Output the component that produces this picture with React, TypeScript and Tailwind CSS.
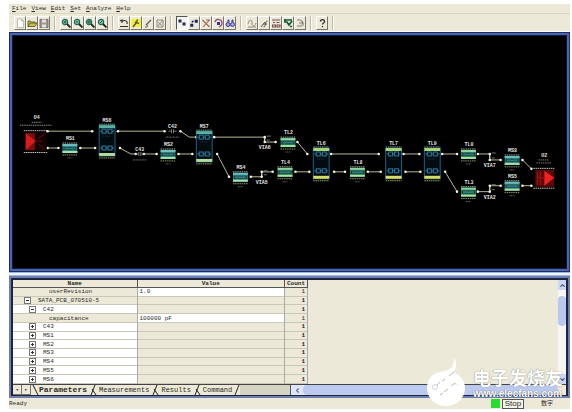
import { Fragment, ReactNode } from 'react';
import { ChevronDown, ChevronLeft, ChevronUp } from 'lucide-react';

const MENUS = ['File', 'View', 'Edit', 'Set', 'Analyze', 'Help'];

interface Tool {
    name: string;
    icon: ReactNode;
    pressed?: boolean;
}

const magnifier = (mark: string) => (
    <>
        <circle cx="4" cy="4" r="2.6" fill="#7fc4a4" stroke="#1e6b55" strokeWidth="1.2" />
        <path d="M6 6l3.5 3.5" stroke="#20252b" strokeWidth="1.8" />
        <path d={mark} stroke="#123d33" strokeWidth="0.8" />
    </>
);

const TOOL_GROUPS: Tool[][] = [
    [
        { name: 'New', icon: <path d="M2.5 1h4l2 2v6.5h-6z M6.5 1v2h2" fill="#fff" stroke="#a8a89c" strokeWidth="0.7" /> },
        { name: 'Open', icon: <path d="M1 8.5V3h2.5l1 1H8v1.5M1 8.5l2-3.5h7L8 8.5z" fill="#c8bf4a" stroke="#55511c" strokeWidth="0.8" /> },
        {
            name: 'Save',
            icon: (
                <>
                    <path d="M1 1.5h8v8H1z" fill="#a09a94" stroke="#6b5d5a" strokeWidth="0.8" />
                    <path d="M3 1.5h4v3H3zM3 6.5h4v3H3z" fill="#e8e2dc" />
                </>
            ),
        },
    ],
    [
        { name: 'Zoom in', icon: magnifier('M2.8 4h2.4M4 2.8v2.4') },
        { name: 'Zoom out', icon: magnifier('M2.8 4h2.4') },
        { name: 'Zoom area', icon: magnifier('M3 3h2v2H3z') },
        { name: 'Zoom fit', icon: magnifier('M3 5l2-2') },
    ],
    [
        { name: 'Undo', icon: <path d="M1 3l2-1v3M3 3.5c3-2 6-.5 5 2.5M1 8.5h8" stroke="#33332f" strokeWidth="1.1" /> },
        {
            name: 'Highlight',
            icon: (
                <>
                    <path d="M0 1h10v8H0z" fill="#f4f03a" />
                    <path d="M6.5 1.5L5 5 2 9M4 4l4 1.5" stroke="#62611f" strokeWidth="1.6" />
                </>
            ),
        },
        { name: 'Pencil', icon: <path d="M8 2L3.5 6.5M3 6l2 2.5M2 9h2" stroke="#55554e" strokeWidth="1.1" /> },
        { name: 'Cut', icon: <path d="M2 2h6v7H2zM8 2L3 8M3 4l4 4" stroke="#85827a" strokeWidth="0.9" /> },
    ],
    [
        { name: 'Place', pressed: true, icon: <path d="M1.5 1.5h3v3h-3zM5.5 4.5h3v3h-3z" fill="#28285e" /> },
        { name: 'Connect', icon: <path d="M1.5 6h2.5v2.5H1.5zM6 2h2.5v2.5H6zM3 5V3h2" fill="#20206c" stroke="#20206c" strokeWidth="0.5" /> },
        { name: 'Delete', icon: <path d="M1.5 2l7 7M8.5 2L2 9M5 2h4" stroke="#a0655c" strokeWidth="1.1" /> },
        {
            name: 'Rotate',
            icon: (
                <>
                    <path d="M2 4c1-4 7-3 7 1 0 2-1.5 3.5-3 4" stroke="#93456b" strokeWidth="1.2" />
                    <path d="M4 4h3v3H4z" fill="#34348c" />
                </>
            ),
        },
        {
            name: 'Find',
            icon: (
                <>
                    <path d="M3 4V2h1v2M7 4V2h1v2" stroke="#33339c" />
                    <circle cx="3" cy="6.5" r="2" fill="#a9acd9" stroke="#33339c" />
                    <circle cx="7.5" cy="6.5" r="2" fill="#a9acd9" stroke="#33339c" />
                </>
            ),
        },
    ],
    [
        { name: 'Simulate', icon: <path d="M1 6c1-5 4-5 4-1s3 4 4 0M1 9h8" stroke="#8b8b80" /> },
        { name: 'Sweep', icon: <path d="M2 9l4-5M4.5 9c3 0 1-6 4-6M4 6h4" stroke="#55554c" /> },
        { name: 'Report', icon: <path d="M1 2h8M2 4.5h2M5.5 4.5h3M1.5 7h3v2h-3zM6 7h3v2H6z" stroke="#7b4d55" strokeWidth="1.1" /> },
        { name: 'Waveform', icon: <path d="M1 2h8M1 4h3l2 3 3-4M7 8.5h2M2 1v3" stroke="#175b3a" strokeWidth="1.7" /> },
        { name: 'Export', icon: <path d="M2 2h4l2 2v4M2 8h5M4 5h4L6.5 3.5M8 5L6.5 6.5" stroke="#77746c" strokeWidth="0.9" /> },
    ],
    [
        { name: 'Help', icon: <path d="M3.5 3.5c0-2.500 4-2.500 4 0 0 1.500-2 1.500-2 3M5.5 8v1.3" stroke="#2c2c28" strokeWidth="1.3" /> },
    ],
];

// Canvas coordinates: single blocks are 15 wide, coupled pairs span both nets
const SINGLES = [
    { x: 61, y: 143, label: 'MS1', tone: 'ms' },
    { x: 160, y: 149, label: 'MS2', tone: 'ms' },
    { x: 233, y: 172, label: 'MS4', tone: 'ms' },
    { x: 281, y: 137, label: 'TL2', tone: 'tl' },
    { x: 278, y: 167, label: 'TL4', tone: 'tl' },
    { x: 351, y: 167, label: 'TL8', tone: 'tl' },
    { x: 463, y: 149, label: 'TL0', tone: 'tl' },
    { x: 463, y: 187, label: 'TL3', tone: 'tl' },
    { x: 507, y: 155, label: 'MS8', tone: 'ms' },
    { x: 507, y: 181, label: 'MS5', tone: 'ms' },
];

const PAIRS = [
    { x: 98, y: 125, label: 'MS6', tone: 'ms' },
    { x: 196, y: 131, label: 'MS7', tone: 'ms' },
    { x: 314, y: 148, label: 'TL6', tone: 'tl' },
    { x: 387, y: 148, label: 'TL7', tone: 'tl' },
    { x: 426, y: 148, label: 'TL9', tone: 'tl' },
];

const CAPS = [
    { x: 172, y: 132, label: 'C42' },
    { x: 139, y: 155, label: 'C43' },
];

const VIAS = [
    { x: 265, y: 138, end: 143, label: 'VIA6' },
    { x: 262, y: 178, end: 173, label: 'VIA5' },
    { x: 492, y: 155, end: 161, label: 'VIA7' },
    { x: 492, y: 193, end: 187, label: 'VIA2' },
];

const WIRES = [
    '46,132 91,132', '117,132 164,132', '180,132 189,138 196,138', '214,138 265,138',
    '46,149 57,149', '79,149 94,149', '119,149 130,155 135,155', '143,155 156,155', '178,155 192,155',
    '217,155 229,178', '251,178 262,178', '265,143 276,143', '298,143 308,155', '332,155 380,155',
    '262,173 273,173', '296,173 310,173', '335,173 346,173', '369,173 382,173', '405,155 421,155',
    '407,173 422,173', '444,155 459,155', '447,173 459,193', '480,155 492,155', '480,193 492,193',
    '492,161 503,161', '492,187 503,187', '525,161 534,170', '525,187 534,187',
];

function Coil({ x, y }: { x: number; y: number }) {
    return (
        <g fill="none" stroke="#2d7fa3" strokeWidth="1">
            <rect x={x} y={y - 2} width="4" height="4" />
            <rect x={x + 6} y={y - 2} width="4" height="4" />
            <path d={`M${x - 2} ${y}h2M${x + 4} ${y}h2M${x + 10} ${y}h2`} />
        </g>
    );
}

function Label({ x, y, children }: { x: number; y: number; children: string }) {
    return (
        <text x={x} y={y} textAnchor="middle" fontSize="5" fontWeight="bold" fill="#e4e4e4">{children}</text>
    );
}

function Schematic() {
    return (
        <svg
            viewBox="12 36 556 234"
            className="block h-full w-full font-['Liberation_Mono',monospace]"
            role="img"
            aria-label="Topology"
        >
            <g fill="none" stroke="#b9b99a" strokeWidth="1">
                {WIRES.map(points => <polyline key={points} points={points} />)}
            </g>
            <g fill="#f4f4dc">
                {WIRES.map(points => {
                    const ends = points.split(' ').map(p => p.split(','));
                    return [ends[0], ends[ends.length - 1]].map(([x, y], i) => (
                        <circle key={`${points}-${i}`} cx={x} cy={y} r="1.3" />
                    ));
                })}
            </g>

            {SINGLES.map(({ x, y, label, tone }) => (
                <g key={label}>
                    <Label x={x + 8} y={y - 2}>{label}</Label>
                    <path d={`M${x} ${y + 1}h15`} stroke="#9fb8a4" strokeDasharray="1.5 0.7" />
                    <rect x={x} y={y + 2} width="15" height="9" fill={tone === 'ms' ? '#2d8088' : '#2f7a55'} />
                    <path d={`M${x} ${y + 3}h15`} stroke={tone === 'ms' ? '#6fc0bb' : '#8ad5a0'} strokeWidth="2" />
                    <path d={`M${x} ${y + 10}h15`} stroke="#a5e3a2" strokeWidth="2" />
                    <rect x={x + 1} y={y + 5} width="13" height="3" fill="#10393b" />
                    <path d={`M${x + 2} ${y + 6}h4l3 1h4M${x + 2} ${y + 7}h4l3-1h4`} stroke="#48a09b" strokeWidth="0.7" fill="none" />
                    <path d={`M${x} ${y + 13}h15`} stroke="#8c9c6c" strokeDasharray="1.5 0.7" />
                    <path d={`M${x + 5} ${y + 16}h5`} stroke="#666" strokeDasharray="1 0.5" />
                </g>
            ))}

            {PAIRS.map(({ x, y, label, tone }) => (
                <g key={label}>
                    <Label x={x + 8} y={y - 2}>{label}</Label>
                    <path d={`M${x} ${y}h16`} stroke="#9aac98" strokeDasharray="1.5 0.7" />
                    <rect x={x} y={y + 1} width="16" height="31" fill="#020c10" stroke="#255f83" />
                    <rect x={x} y={y + 1} width="16" height="3" fill={tone === 'ms' ? '#59b39c' : '#a9d473'} />
                    <Coil x={x + 3} y={y + 7} />
                    <Coil x={x + 3} y={y + 24} />
                    <path d={`M${x + 4} ${y + 12}h8`} stroke="#23404d" strokeDasharray="1 1" />
                    <rect x={x} y={y + 29} width="16" height="3" fill={tone === 'ms' ? '#b2dda0' : '#d6dd60'} />
                    <path d={`M${x} ${y + 34}h16`} stroke="#a3a35b" strokeDasharray="1.5 0.7" />
                </g>
            ))}

            {CAPS.map(({ x, y, label }) => (
                <g key={label}>
                    <Label x={x} y={y - 3}>{label}</Label>
                    <path d={`M${x - 4} ${y}h3M${x + 1} ${y}h3M${x - 1} ${y - 2}v4M${x + 1} ${y - 2}v4`} stroke="#8f9a8c" strokeWidth="0.8" />
                    <path d={`M${x - 7} ${y + 6}h14`} stroke="#777" strokeDasharray="1 0.5" />
                </g>
            ))}

            {VIAS.map(({ x, y, end, label }) => (
                <g key={label}>
                    <path d={`M${x} ${y}V${end}`} stroke="#e8e8d8" strokeWidth="1.2" />
                    <path d={`M${x + 2} ${Math.min(y, end) - 1}h4M${x + 2} ${Math.max(y, end) - 2}h3`} stroke="#777" />
                    <Label x={x} y={Math.max(y, end) + 7}>{label}</Label>
                </g>
            ))}

            {/* driver */}
            <Label x={35} y={120}>U4</Label>
            <path d="M30 123h10M18 126h32" stroke="#8b8b8b" strokeDasharray="1.5 0.7" />
            <rect x="23" y="133" width="22" height="19" fill="#150303" />
            <path d="M24 134h9v17h-9z" fill="#7c0d0d" />
            <path d="M24 134l10 8-10 9z" fill="#d81c1c" />
            <path d="M34 142h7M37 139l6-4M37 145l6 5" stroke="#5d1212" />
            <path d="M22 131.5h24M22 153.5h24" stroke="#c9c9c9" strokeDasharray="1.5 0.7" />

            {/* receiver */}
            <Label x={547} y={158}>U2</Label>
            <path d="M541 161h11M539 164h15" stroke="#777" strokeDasharray="1.5 0.7" />
            <rect x="538" y="171" width="19" height="17" fill="#5d0808" />
            <path d="M547 172l10 7-10 8z" fill="#f02020" />
            <path d="M540 173v13M543 173v13M540 179h8" stroke="#a01818" />
            <path d="M536 169.5h21M536 189.5h21" stroke="#c9c9c9" strokeDasharray="1.5 0.7" />
        </svg>
    );
}

interface Row {
    name: string;
    level: 0 | 1 | 2;
    open?: boolean;
    value?: string;
}

const ROWS: Row[] = [
    { name: 'userRevision', level: 2, value: '1.0' },
    { name: 'SATA_PCB_070510-5', level: 0, open: true },
    { name: 'C42', level: 1, open: true },
    { name: 'capacitance', level: 2, value: '100000 pF' },
    { name: 'C43', level: 1 },
    { name: 'MS1', level: 1 },
    { name: 'MS2', level: 1 },
    { name: 'MS3', level: 1 },
    { name: 'MS4', level: 1 },
    { name: 'MS5', level: 1 },
    { name: 'MS6', level: 1 },
];

const INDENT = { 0: 'pl-[11px]', 1: 'pl-4', 2: 'pl-9' };

function ParameterTable() {
    return (
        <table className="h-[104px] w-[295px] table-fixed border-collapse text-[6px] leading-[7px]">
            <thead>
                <tr className="border-b border-[#555]">
                    <th className="w-[124px] border-r border-[#555] p-0">Name</th>
                    <th className="border-r border-[#555] p-0">Value</th>
                    <th className="w-[23px] border-r border-[#555] p-0">Count</th>
                </tr>
            </thead>
            <tbody>
                {ROWS.map(({ name, level, open, value }) => (
                    <tr key={name} className="border-b border-[#c9c7b8]">
                        <td className={`border-r border-[#aaa] p-0 ${level === 1 ? 'bg-white' : ''}`}>
                            <div className={`flex items-center gap-[7px] ${INDENT[level]}`}>
                                {level < 2 && (
                                    <button
                                        aria-label={`${open ? 'Collapse' : 'Expand'} ${name}`}
                                        className="flex size-[7px] shrink-0 items-center justify-center border border-[#777] bg-white"
                                    >
                                        <svg viewBox="0 0 5 5" className="size-[5px]" stroke="#333">
                                            <path d={open ? 'M1 2.5h3' : 'M1 2.5h3M2.5 1v3'} />
                                        </svg>
                                    </button>
                                )}
                                <span>{name}</span>
                            </div>
                        </td>
                        <td className={`border-r border-[#aaa] p-0 pl-[2px] ${value ? 'bg-white' : ''}`}>{value}</td>
                        <td className={`border-r border-[#aaa] p-0 pr-[2px] text-right ${value ? '' : 'font-bold'}`}>1</td>
                    </tr>
                ))}
            </tbody>
        </table>
    );
}

function Slash({ back }: { back?: boolean }) {
    return (
        <svg viewBox={back ? '0 0 8 10' : '0 0 12 10'} className={`h-[10px] shrink-0 ${back ? 'w-2' : 'w-3'}`} fill="none" stroke="#222">
            <path d={back ? 'M2 0l5 10' : 'M8 0L4 10M5 4l4 6'} />
        </svg>
    );
}

function SheetTabs() {
    return (
        <div className="flex h-[11px] items-stretch border-t border-[#444] text-[7px] leading-[10px]">
            <div className="flex w-[277px] shrink-0 items-stretch bg-[#d5d3c4]">
                <button aria-label="Previous sheet" className="w-[9px] border-r border-b border-[#777] bg-[#ece9d8] text-[5px]">◂</button>
                <button aria-label="Next sheet" className="w-[9px] border-r border-b border-[#777] bg-[#ece9d8] text-[5px]">▸</button>
                <div className="flex items-stretch bg-[#ece9d8]">
                    <Slash back />
                    <button className="text-[8px] font-bold">Parameters</button>
                    {['Measurements', 'Results', 'Command'].map(tab => (
                        <Fragment key={tab}>
                            <Slash />
                            <button>{tab}</button>
                        </Fragment>
                    ))}
                    <svg viewBox="0 0 8 10" className="h-[10px] w-2 shrink-0" stroke="#222">
                        <path d="M7 0L3 10" />
                    </svg>
                </div>
            </div>
            <div className="flex flex-1 items-stretch border-l border-[#555] bg-[#f3f3f3]">
                <button aria-label="Scroll left" className="flex w-3 items-center justify-center bg-[#dfe6f8]">
                    <ChevronLeft size={7} strokeWidth={4} className="text-[#5d6c92]" />
                </button>
                <div className="flex-1 rounded-sm bg-[#bccaf0]" />
                <div className="w-2 bg-[#ece9d8]" />
            </div>
        </div>
    );
}

function Watermark() {
    return (
        <div className="pointer-events-none absolute right-[9px] bottom-[6px] flex items-end gap-2 text-white">
            <svg viewBox="0 0 38 49" className="h-[49px] w-[38px]">
                <path d="M27 0c3 6 3 12-1 15 7 3 12 8 12 16 0 10-8 18-19 18S0 41 0 31c0-11 8-16 18-17 5-1 10-5 9-14z" fill="#fff" />
                <path d="M10 28l3-3M15 24l3-2M22 19l5-4M13 38l3-2M17 35l4-3M24 29l4-3" stroke="#b9b9ae" strokeWidth="1" fill="none" />
                <circle cx="8" cy="30" r="2.5" fill="#fff" stroke="#cfd3dd" />
                <path d="M28 27h4" stroke="#c8c8bc" strokeDasharray="1 1" />
            </svg>
            <div className="pb-2 font-['Liberation_Sans','Noto_Sans_CJK_SC',sans-serif] font-bold">
                <div className="text-[18px] leading-[20px] [text-shadow:0_0_1px_#555]">电子发烧友</div>
                <div className="text-[10px] leading-[9px] [text-shadow:0_0_1px_#333]">www.elecfans.com</div>
            </div>
        </div>
    );
}

export default function App() {
    return (
        <div className="relative flex h-screen flex-col bg-white pt-1 pr-[2px] pb-[3px] pl-[9px] font-['Liberation_Mono','Noto_Sans_CJK_SC',monospace] text-[#2a2a26]">
            <nav className="flex h-[10px] items-center gap-[5px] border-b border-[#d8d5c5] bg-[#ece9d8] pl-[3px] text-[6px] leading-[9px]">
                {MENUS.map(menu => (
                    <button key={menu}><span className="underline">{menu[0]}</span>{menu.slice(1)}</button>
                ))}
            </nav>

            <div role="toolbar" className="flex h-[18px] items-center gap-1 border-b border-white bg-[#ece9d8] pl-[5px]">
                {TOOL_GROUPS.map((group, i) => (
                    <Fragment key={i}>
                        <div className="flex">
                            {group.map(({ name, icon, pressed }) => (
                                <button
                                    key={name}
                                    aria-label={name}
                                    aria-pressed={pressed}
                                    className={`flex h-[14px] w-[12px] items-center justify-center border ${pressed ? 'border-t-[#555] border-r-white border-b-white border-l-[#555] bg-[#f5f4ee]' : 'border-t-white border-r-[#77756a] border-b-[#77756a] border-l-white'}`}
                                >
                                    <svg viewBox="0 0 10 10" className="size-[10px] shrink-0" fill="none">{icon}</svg>
                                </button>
                            ))}
                        </div>
                        <div className="h-[14px] w-[2px] border-r border-white bg-[#bdbaa9]" />
                    </Fragment>
                ))}
            </div>

            <main className="min-h-0 flex-1 border border-[#1d2c68] bg-[#4a66ad] p-[2px]">
                <div className="h-full border border-[#101838] bg-black">
                    <Schematic />
                </div>
            </main>

            <div className="h-1 border-y border-[#9db6e4] bg-[#eef4ff]" />

            <section className="border-2 border-[#6c7fae] bg-[#ece9d8]">
                <div className="border-2 border-b border-[#1e2340]">
                    <div className="flex">
                        <div className="flex-1"><ParameterTable /></div>
                        <div className="flex w-2 flex-col bg-[#f6f6f2]">
                            <button aria-label="Scroll up" className="flex h-[10px] items-center justify-center bg-[#cbd7f5]">
                                <ChevronUp size={7} strokeWidth={4} className="text-[#42557f]" />
                            </button>
                            <div className="mt-[6px] h-[30px] rounded-sm bg-[#b9c8ef]" />
                            <button aria-label="Scroll down" className="mt-auto flex h-[10px] items-center justify-center bg-[#cbd7f5]">
                                <ChevronDown size={7} strokeWidth={4} className="text-[#42557f]" />
                            </button>
                        </div>
                    </div>
                    <SheetTabs />
                </div>
            </section>

            <footer className="flex h-[11px] items-center bg-[#ece9d8] text-[6px] leading-[9px]">
                <span>Ready</span>
                <span className="ml-auto h-[9px] w-[9px] bg-[#25dc30]" />
                <button className="mx-[2px] h-[10px] w-[22px] border border-[#555] bg-[#f4f3ea] font-['Liberation_Sans',sans-serif] text-[8px] leading-[8px]">Stop</button>
                <span className="mr-[17px] pl-[15px]">数字</span>
            </footer>

            <Watermark />
        </div>
    );
}
